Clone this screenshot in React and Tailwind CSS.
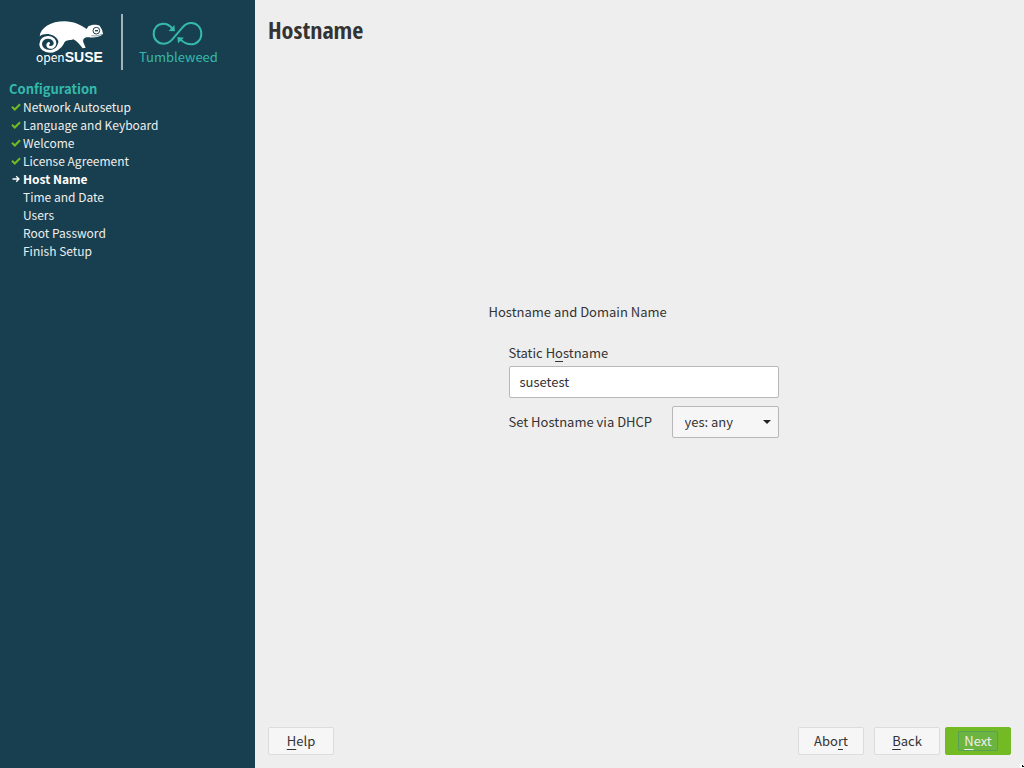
import React from 'react';

const steps = [
  { name: 'Network Autosetup', state: 'done' },
  { name: 'Language and Keyboard', state: 'done' },
  { name: 'Welcome', state: 'done' },
  { name: 'License Agreement', state: 'done' },
  { name: 'Host Name', state: 'current' },
  { name: 'Time and Date', state: 'todo' },
  { name: 'Users', state: 'todo' },
  { name: 'Root Password', state: 'todo' },
  { name: 'Finish Setup', state: 'todo' },
];

function Key({ children }) {
  return <span className="underline decoration-1 underline-offset-3 [text-decoration-skip-ink:none]">{children}</span>;
}

function Chameleon() {
  return (
    <svg viewBox="18 33 210 99" className="h-[33px] w-[70px]" aria-hidden="true">
      <path
        fill="#fff"
        d="M29 82 C32 56 62 37 104 37 C130 37 152 48 170 60 L175 52 C184 46 200 46 209 50 L216 62 L219 74 C215 82 195 87 172 85 C162 85 158 92 160 100 L167 116 L158 118 C150 108 142 96 130 91 C120 95 110 92 104 99 C98 114 84 126 66 131 L60 126 C78 122 90 108 84 94 C74 74 44 70 29 82 Z"
      />
      <path
        fill="none"
        stroke="#fff"
        strokeWidth="8"
        strokeLinecap="round"
        d="M88 104 C84 119 75 127 60 127 C44 127 32 118 32 105 C32 92 44 84 56 85 C68 86 76 95 75 104 C74 113 66 116 60 115 C53 114 50 107 56 103"
      />
      <circle cx="199" cy="65" r="10" fill="none" stroke="#173f4f" strokeWidth="3" />
      <path d="M195 65 H204" stroke="#173f4f" strokeWidth="4" />
      <path d="M184 80 C196 82 208 80 216 75" fill="none" stroke="#173f4f" strokeWidth="1.5" />
    </svg>
  );
}

function Loop() {
  return (
    <svg viewBox="114 38 156 78" className="h-[26px] w-[52px]" fill="none" stroke="currentColor" strokeWidth="6" aria-hidden="true">
      <path d="M175 61 C168 51 158 46 148 46 C131 46 119 60 119 76 C119 93 132 106 148 106 C159 106 168 101 175 93 L205 58 C212 49 222 44 232 44 C249 44 262 58 262 76 C262 94 249 108 232 108 C220 108 209 103 200 94" />
      <path fill="currentColor" stroke="none" d="M183 69 L181 50 L164 68 Z M190 86 L210 88 L192 105 Z" />
    </svg>
  );
}

function Logo() {
  return (
    <div className="flex h-14 items-center pl-9 text-white">
      <div className="flex w-[70px] flex-col pb-1">
        <Chameleon />
        <span className="text-xs leading-2">
          open<b className="font-['Liberation_Sans',sans-serif] text-sm leading-2">SUSE</b>
        </span>
      </div>
      <div className="ml-[15px] h-full w-0.5 bg-[#a3b2b9]" />
      <div className="ml-4 flex flex-col items-center pt-1 text-[#35b9ab]">
        <Loop />
        <span className="leading-5">Tumbleweed</span>
      </div>
    </div>
  );
}

function StepMark({ state }) {
  return (
    <span className="flex w-3.5 shrink-0 items-center justify-center">
      {state === 'done' && (
        <svg viewBox="0 0 10 8" className="h-2 w-2.5" fill="none" stroke="#73ba25" strokeWidth="2" aria-hidden="true">
          <path d="M1 3.8 L3.8 6.5 L9 1.3" />
        </svg>
      )}
      {state === 'current' && (
        <svg viewBox="0 0 8 8" className="h-2 w-2" fill="none" stroke="#fff" strokeWidth="1.3" aria-hidden="true">
          <path d="M0.5 4 H7 M4.2 1.3 L7 4 L4.2 6.7" />
        </svg>
      )}
    </span>
  );
}

const button = 'flex h-7 w-[66px] items-center justify-center rounded-xs border text-[13px] leading-5';

export default function App() {
  return (
    <div className="flex min-h-screen bg-[#eeeeee] font-['Noto_Sans_CJK_SC',sans-serif] text-[13px] leading-[18px] text-[#333333]">
      <aside className="w-[255px] shrink-0 bg-[#173f4f] pt-3.5 text-[#eeeeee]">
        <Logo />
        <nav className="px-[9px] pt-2.5">
          <h2 className="font-bold text-[#35b9ab]">Configuration</h2>
          <ol className="text-xs leading-[18px]">
            {steps.map((step) => (
              <li key={step.name} className={step.state === 'current' ? 'flex font-bold text-white' : 'flex'}>
                <StepMark state={step.state} />
                {step.name}
              </li>
            ))}
          </ol>
        </nav>
      </aside>

      <form className="flex grow flex-col px-[13px] pb-[13px]" onSubmit={(e) => e.preventDefault()}>
        <h1 className="pt-3.5 font-['Open_Sans_Condensed','Noto_Sans_CJK_SC',sans-serif] text-2xl leading-8 font-bold">Hostname</h1>

        <main className="flex grow items-center justify-center pb-8">
          <fieldset className="flex flex-col pr-3">
            <legend>Hostname and Domain Name</legend>
            <div className="flex w-[290px] flex-col pt-[23px] pl-5">
              <label htmlFor="hostname">Static H<Key>o</Key>stname</label>
              <input id="hostname" type="text" defaultValue="susetest" className="mt-1 h-8 rounded-xs border border-[#b8b8b8] bg-white px-2.5 pb-0.5 outline-none" />
              <div className="mt-2 flex items-center justify-between">
                <label htmlFor="dhcp">Set Hostname via DHCP</label>
                <div className="grid w-[107px] items-center">
                  <select id="dhcp" className="col-start-1 row-start-1 h-8 w-full appearance-none rounded-xs border border-[#b8b8b8] bg-[#f6f6f6] px-3 outline-none">
                    <option>yes: any</option>
                    <option>no</option>
                  </select>
                  <svg viewBox="0 0 8 4" className="pointer-events-none col-start-1 row-start-1 mr-2 h-1 w-2 justify-self-end" fill="#222" aria-hidden="true">
                    <path d="M0 0 H8 L4 4 Z" />
                  </svg>
                </div>
              </div>
            </div>
          </fieldset>
        </main>

        <footer className="flex">
          <button type="button" className={`${button} border-[#dcdcdc] bg-[#f6f6f6]`}><span><Key>H</Key>elp</span></button>
          <button type="button" className={`${button} ml-auto border-[#dcdcdc] bg-[#f6f6f6]`}><span>Abo<Key>r</Key>t</span></button>
          <button type="button" className={`${button} ml-2.5 border-[#dcdcdc] bg-[#f6f6f6]`}><span><Key>B</Key>ack</span></button>
          <button type="submit" className={`${button} ml-[5px] border-[#73ba25] bg-[#73ba25] text-[#eeeeee]`}>
            <span className="rounded-xs border border-[#57a055] bg-[#6bb43f] px-[5px] leading-[18px]"><Key>N</Key>ext</span>
          </button>
        </footer>
      </form>

      <svg viewBox="0 0 4 4" className="pointer-events-none fixed right-0 bottom-0 h-1 w-1" aria-hidden="true">
        <path fill="#fff" d="M0 0 H2 L4 2 V4 H0 Z" />
        <path fill="#000" d="M2 1 V3 H4 V2 H3 V1 Z" />
      </svg>
    </div>
  );
}
